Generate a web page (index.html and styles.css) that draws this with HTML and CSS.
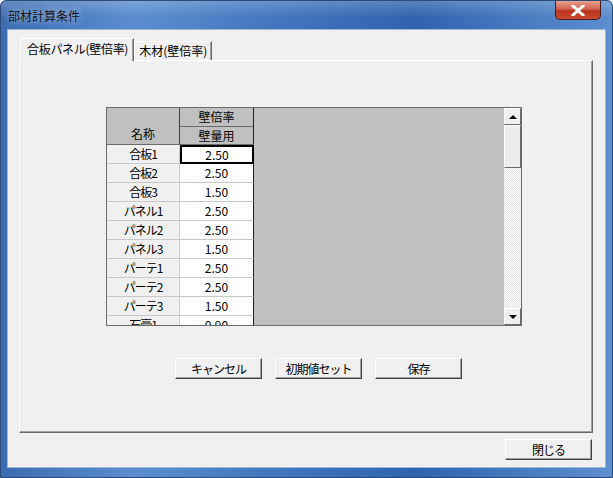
FILE: index.html
```html
<!DOCTYPE html>
<html>
<head>
	<meta charset="utf-8">
	<title>部材計算条件</title>
	<link rel="stylesheet" href="styles.css">
</head>
<body>
	<div class="window">
		<div class="titlebar">
			<span class="title">部材計算条件</span>
			<div class="close-btn">
				<svg width="14" height="11" viewBox="0 0 14 11"><path d="M2 1 L12 10 M12 1 L2 10" stroke="#fff" stroke-width="3" stroke-linecap="square"/></svg>
			</div>
		</div>
		<div class="client">
			<div class="tabs">
				<div class="tab active">合板パネル(壁倍率)</div>
				<div class="tab">木材(壁倍率)</div>
			</div>
			<div class="panel">
				<div class="sheet">
					<div class="cols">
						<div class="head">
							<div class="head-name">名称</div>
							<div class="head-val">
								<div class="hv top">壁倍率</div>
								<div class="hv">壁量用</div>
							</div>
						</div>
						<div class="rows">
							<div class="row"><div class="name">合板1</div><div class="val selected">2.50</div></div>
							<div class="row"><div class="name">合板2</div><div class="val">2.50</div></div>
							<div class="row"><div class="name">合板3</div><div class="val">1.50</div></div>
							<div class="row"><div class="name">パネル1</div><div class="val">2.50</div></div>
							<div class="row"><div class="name">パネル2</div><div class="val">2.50</div></div>
							<div class="row"><div class="name">パネル3</div><div class="val">1.50</div></div>
							<div class="row"><div class="name">パーテ1</div><div class="val">2.50</div></div>
							<div class="row"><div class="name">パーテ2</div><div class="val">2.50</div></div>
							<div class="row"><div class="name">パーテ3</div><div class="val">1.50</div></div>
							<div class="row"><div class="name">石膏1</div><div class="val">0.90</div></div>
						</div>
					</div>
					<div class="empty"></div>
					<div class="scrollbar">
						<div class="sb-btn"><span class="arrow up"></span></div>
						<div class="sb-thumb"></div>
						<div class="sb-track"></div>
						<div class="sb-btn"><span class="arrow down"></span></div>
					</div>
				</div>
				<div class="actions">
					<button class="btn">キャンセル</button>
					<button class="btn">初期値セット</button>
					<button class="btn">保存</button>
				</div>
			</div>
			<div class="footer">
				<button class="btn">閉じる</button>
			</div>
		</div>
	</div>
</body>
</html>
```

FILE: styles.css
```css
* {
	margin: 0;
	padding: 0;
	box-sizing: border-box;
}

body {
	width: 613px;
	height: 478px;
	overflow: hidden;
	font-family: "Noto Sans CJK JP", "DejaVu Sans", sans-serif;
	font-size: 12px;
	color: #000;
	background: #fff;
}

.window {
	width: 613px;
	height: 478px;
	border-radius: 6px 6px 0 0;
	border: 1px solid #2a4a78;
	background: linear-gradient(to right, #3b6cb2 0%, #5b8dd0 22%, #4479c0 42%, #2f63ae 68%, #5d8ed0 100%);
	display: flex;
	flex-direction: column;
}

.titlebar {
	height: 28px;
	display: flex;
	align-items: flex-start;
	background: linear-gradient(to bottom, rgba(255,255,255,0.2), rgba(255,255,255,0) 60%);
	border-radius: 6px 6px 0 0;
}

.title {
	margin: 6px 0 0 7px;
	font-size: 12px;
	color: #111;
	text-shadow: 0 0 6px rgba(255,255,255,0.7);
}

.close-btn {
	margin-left: auto;
	margin-right: 11px;
	width: 46px;
	height: 19px;
	border: 1px solid #4a1a1a;
	border-top: none;
	border-radius: 0 0 5px 5px;
	background: linear-gradient(to bottom, #e8a08f 0%, #d0614d 45%, #b8321d 55%, #c94c30 100%);
	display: flex;
	align-items: center;
	justify-content: center;
}

.client {
	margin: 0 6px;
	height: 439px;
	background: #f0f0f0;
	border: 1px solid #9fb6d6;
	display: flex;
	flex-direction: column;
}

.tabs {
	display: flex;
	align-items: flex-end;
	margin: 8px 0 0 12px;
	height: 22px;
}

.tab {
	height: 19px;
	padding: 0 4px 0 4px;
	border-top: 1px solid #fff;
	border-left: 1px solid #fff;
	border-right: 1px solid #696969;
	box-shadow: inset -1px 0 #a0a0a0;
	line-height: 18px;
	font-size: 12px;
}

.tab.active {
	height: 23px;
	margin-bottom: -1px;
	padding: 0 5px 0 6px;
	line-height: 20px;
	letter-spacing: -0.3px;
	background: #f0f0f0;
	position: relative;
	z-index: 1;
}

.panel {
	margin-left: 11px;
	width: 574px;
	height: 373px;
	border-top: 1px solid #fff;
	border-left: 1px solid #fff;
	border-right: 1px solid #696969;
	border-bottom: 1px solid #696969;
	box-shadow: inset -1px -1px #a0a0a0;
	padding: 46px 0 0 86px;
}

.sheet {
	width: 416px;
	height: 219px;
	border: 1px solid #6b6b6b;
	display: flex;
	overflow: hidden;
}

.cols {
	width: 147px;
	display: flex;
	flex-direction: column;
	overflow: hidden;
}

.head {
	display: flex;
	height: 37px;
	background: #c0c0c0;
	border-bottom: 1px solid #6b6b6b;
	flex-shrink: 0;
}

.head-name {
	width: 73px;
	border-right: 1px solid #404040;
	text-align: center;
	padding-top: 17px;
	line-height: 18px;
}

.head-val {
	width: 74px;
	border-right: 1px solid #202020;
	display: flex;
	flex-direction: column;
}

.hv {
	height: 18px;
	line-height: 17px;
	text-align: center;
}

.hv.top {
	height: 19px;
	border-bottom: 1px solid #6b6b6b;
}

.row {
	display: flex;
	height: 19px;
	flex-shrink: 0;
}

.name {
	width: 73px;
	background: #f0f0f0;
	border-right: 1px solid #c8c8c8;
	border-bottom: 1px solid #c8c8c8;
	text-align: center;
	line-height: 18px;
	letter-spacing: -1px;
}

.val {
	width: 74px;
	background: #fff;
	border-right: 1px solid #202020;
	border-bottom: 1px solid #c8c8c8;
	text-align: center;
	line-height: 18px;
}

.val.selected {
	border: 2px solid #000;
	line-height: 15px;
}

.empty {
	flex: 1;
	background: #c0c0c0;
}

.scrollbar {
	width: 17px;
	display: flex;
	flex-direction: column;
}

.sb-btn {
	height: 17px;
	background: #f0f0f0;
	border-top: 1px solid #fff;
	border-left: 1px solid #fff;
	border-right: 1px solid #696969;
	border-bottom: 1px solid #696969;
	display: flex;
	align-items: center;
	justify-content: center;
}

.sb-thumb {
	height: 43px;
	background: #ececec;
	border-top: 1px solid #fff;
	border-left: 1px solid #fff;
	border-right: 1px solid #696969;
	border-bottom: 1px solid #696969;
}

.sb-track {
	flex: 1;
	background: repeating-conic-gradient(#fff 0 25%, #e2e2e2 0 50%) 0 0 / 2px 2px;
}

.arrow {
	width: 0;
	height: 0;
	border-left: 4px solid transparent;
	border-right: 4px solid transparent;
}

.arrow.up {
	border-bottom: 4px solid #000;
}

.arrow.down {
	border-top: 4px solid #000;
}

.actions {
	display: flex;
	gap: 13px;
	margin: 32px 0 0 69px;
}

.btn {
	width: 87px;
	height: 21px;
	font-family: "Noto Sans CJK JP", "DejaVu Sans", sans-serif;
	font-size: 12px;
	letter-spacing: -1px;
	color: #000;
	background: #f0f0f0;
	border-top: 1px solid #fff;
	border-left: 1px solid #fff;
	border-right: 1px solid #404040;
	border-bottom: 1px solid #404040;
	box-shadow: inset -1px -1px #a0a0a0;
	line-height: 18px;
}

.footer {
	display: flex;
	justify-content: flex-end;
	margin: 6px 13px 0 0;
}
```
